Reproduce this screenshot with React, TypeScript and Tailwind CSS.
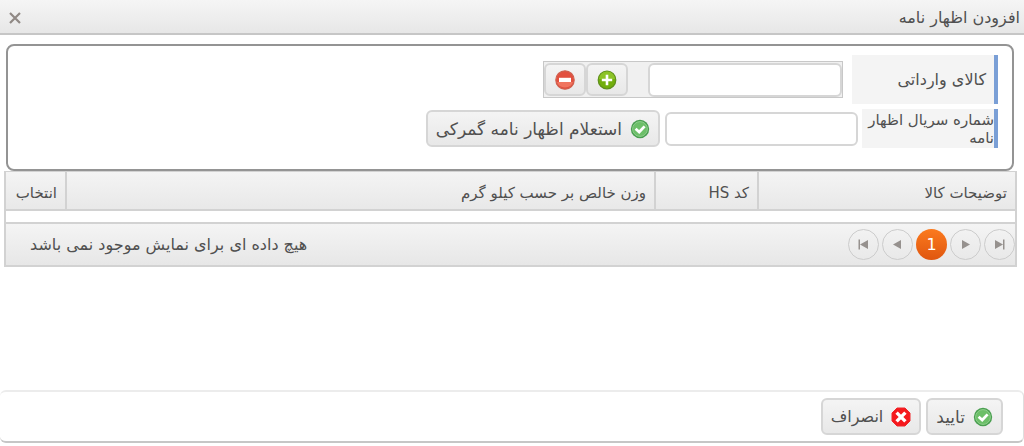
import React, { ReactNode } from 'react';

interface ToolButtonProps {
  children: ReactNode;
  label?: string;
  className?: string;
}

const ToolButton: React.FC<ToolButtonProps> = ({ children, label, className = '' }) => (
  <button
    type="button"
    aria-label={label}
    className={`flex items-center justify-center rounded-md border-2 border-[#d6d6d6] bg-linear-to-b from-[#f4f4f4] to-[#e8e8e8] whitespace-nowrap ${className}`}
  >
    {children}
  </button>
);

const CheckIcon = () => (
  <svg width="20" height="20" viewBox="0 0 20 20" aria-hidden="true">
    <circle cx="10" cy="10" r="9.2" fill="#4a9f50" />
    <circle cx="10" cy="10" r="7.4" fill="#6cbf68" stroke="#8fce8d" strokeWidth="1" />
    <path d="M5.6 9.8l3.6 3.2 5.4-5.6" fill="none" stroke="#fff" strokeWidth="2.8" />
  </svg>
);

const AddIcon = () => (
  <svg width="20" height="20" viewBox="0 0 20 20" aria-hidden="true">
    <circle cx="10" cy="10" r="8.8" fill="#72ae0c" stroke="#5f8f1c" strokeWidth="1.2" />
    <path d="M2 9a8 7.5 0 0 1 16 0z" fill="#8cc328" />
    <path d="M10 4.8v10.4M4.8 10h10.4" stroke="#fff" strokeWidth="2.6" />
  </svg>
);

const RemoveIcon = () => (
  <svg width="20" height="20" viewBox="0 0 20 20" aria-hidden="true">
    <circle cx="10" cy="10" r="9.2" fill="#e2503f" stroke="#d0604f" strokeWidth="1.2" />
    <path d="M2 12a8.2 7 0 0 0 16 0z" fill="#f07560" />
    <rect x="4" y="7.8" width="12" height="4.2" fill="#fff" />
  </svg>
);

const CancelIcon = () => (
  <svg width="20" height="20" viewBox="0 0 20 20" aria-hidden="true">
    <path d="M6 1h8l5 5v8l-5 5H6l-5-5V6z" fill="#f5191d" stroke="#f0262a" strokeLinejoin="round" />
    <path d="M5.6 5.6l8.8 8.8M14.4 5.6l-8.8 8.8" stroke="#fff" strokeWidth="3.4" />
  </svg>
);

// Pager arrows, listed in the order they appear from the right
const pagerItems = [
  { name: 'صفحه اول', path: 'M3 3l8 4.5L3 12zM11 2.5h1.5v10H11z' },
  { name: 'صفحه قبل', path: 'M4 3l8 4.5L4 12z' },
  { name: '1', path: '' },
  { name: 'صفحه بعد', path: 'M11 3L3 7.5l8 4.5z' },
  { name: 'صفحه آخر', path: 'M12 3L4 7.5l8 4.5zM2.5 2.5H4v10H2.5z' },
];

const columns = [
  { name: 'توضیحات کالا', width: 'w-[257px]' },
  { name: 'کد HS', width: 'w-[103px]' },
  { name: 'وزن خالص بر حسب کیلو گرم', width: '' },
  { name: 'انتخاب', width: 'w-[60px]' },
];

const App: React.FC = () => {
  return (
    <div
      dir="rtl"
      className="flex min-h-screen flex-col bg-white font-['DejaVu_Sans',sans-serif] text-[16px] leading-[18px] text-[#505050]"
    >
      {/* Title bar */}
      <header className="flex h-[35px] items-center justify-between border-b-2 border-[#c6c6c6] bg-linear-to-b from-[#f5f5f5] to-[#e7e7e7] pt-0.5 pr-1 pl-[7px]">
        <h1>افزودن اظهار نامه</h1>
        <button type="button" aria-label="بستن" className="p-0.5">
          <svg width="12" height="12" viewBox="0 0 12 12" aria-hidden="true">
            <path d="M1 1l10 10M11 1L1 11" stroke="#908985" strokeWidth="2.2" />
          </svg>
        </button>
      </header>

      <main className="pt-[9px] pr-[7px] pl-1">
        {/* Declaration form */}
        <form className="mr-[3px] ml-0.5 h-[127px] rounded-lg border-2 border-[#949494] py-[9px] pr-3.5">
          <div className="flex items-center gap-[9px]">
            <label
              htmlFor="goods"
              className="flex h-[49px] w-[146px] items-center border-r-4 border-[#7a9fd6] bg-[#f4f4f4] pr-2"
            >
              کالای وارداتی
            </label>
            <div className="flex h-[37px] items-center border border-[#c8c8c8] bg-[#f0f0f0]">
              <input
                id="goods"
                type="text"
                className="h-[34px] w-[194px] rounded-md border-2 border-[#d6d6d6] bg-white px-2"
              />
              <ToolButton label="افزودن" className="mr-5 h-[33px] w-[42px]">
                <AddIcon />
              </ToolButton>
              <ToolButton label="حذف" className="h-[33px] w-[42px]">
                <RemoveIcon />
              </ToolButton>
            </div>
          </div>

          <div className="mt-[5px] flex items-center">
            <label
              htmlFor="serial"
              className="flex h-[39px] w-[136px] items-center border-r-4 border-[#7a9fd6] bg-[#f4f4f4] text-[15px]"
            >
              شماره سریال اظهار نامه
            </label>
            <input
              id="serial"
              type="text"
              className="mr-1 h-[34px] w-[193px] rounded-md border-2 border-[#d6d6d6] bg-white px-2"
            />
            <ToolButton className="mr-[5px] h-[37px] gap-2 px-2 text-[17px]">
              <CheckIcon />
              استعلام اظهار نامه گمرکی
            </ToolButton>
          </div>
        </form>

        {/* Goods grid */}
        <div className="border-2 border-t border-[#d2d2d2]">
          <table className="w-full table-fixed border-collapse text-[15px]">
            <thead className="bg-linear-to-b from-[#f4f4f4] to-[#e8e8e8]">
              <tr className="h-[38px] border-b-2 border-[#d2d2d2]">
                {columns.map((col) => (
                  <th
                    key={col.name}
                    scope="col"
                    className={`border-l-2 border-[#d2d2d2] px-2 pt-1 text-right font-normal whitespace-nowrap last:border-l-0 ${col.width}`}
                  >
                    {col.name}
                  </th>
                ))}
              </tr>
            </thead>
            <tbody>
              <tr className="h-3">
                <td colSpan={4} />
              </tr>
            </tbody>
          </table>
          <div className="flex h-[43px] items-center justify-between border-t-2 border-[#d2d2d2] bg-linear-to-b from-[#f4f4f4] to-[#e7e7e7] pl-6">
            <nav className="flex gap-[3px]" aria-label="صفحه بندی">
              {pagerItems.map((item) =>
                item.path ? (
                  <button
                    key={item.name}
                    type="button"
                    aria-label={item.name}
                    className="flex size-[31px] items-center justify-center rounded-full border border-[#cccccc]"
                  >
                    <svg width="15" height="15" viewBox="0 0 15 15" aria-hidden="true">
                      <path d={item.path} fill="#96918e" />
                    </svg>
                  </button>
                ) : (
                  <button
                    key={item.name}
                    type="button"
                    aria-current="page"
                    className="size-[31px] rounded-full bg-linear-to-b from-[#fb7a1e] to-[#e0560f] text-white"
                  >
                    {item.name}
                  </button>
                )
              )}
            </nav>
            <p>هیچ داده ای برای نمایش موجود نمی باشد</p>
          </div>
        </div>
      </main>

      {/* Dialog actions */}
      <footer className="mt-auto mb-[3px] flex h-[53px] items-center gap-[5px] rounded-md border-y-2 border-r border-t-[#ececec] border-r-[#dedede] border-b-[#c6c6c6] pr-5">
        <ToolButton className="h-[37px] gap-2 px-2 text-[17px]">
          <CheckIcon />
          تایید
        </ToolButton>
        <ToolButton className="h-[37px] gap-2 px-2">
          <CancelIcon />
          انصراف
        </ToolButton>
      </footer>
    </div>
  );
};

export default App;
